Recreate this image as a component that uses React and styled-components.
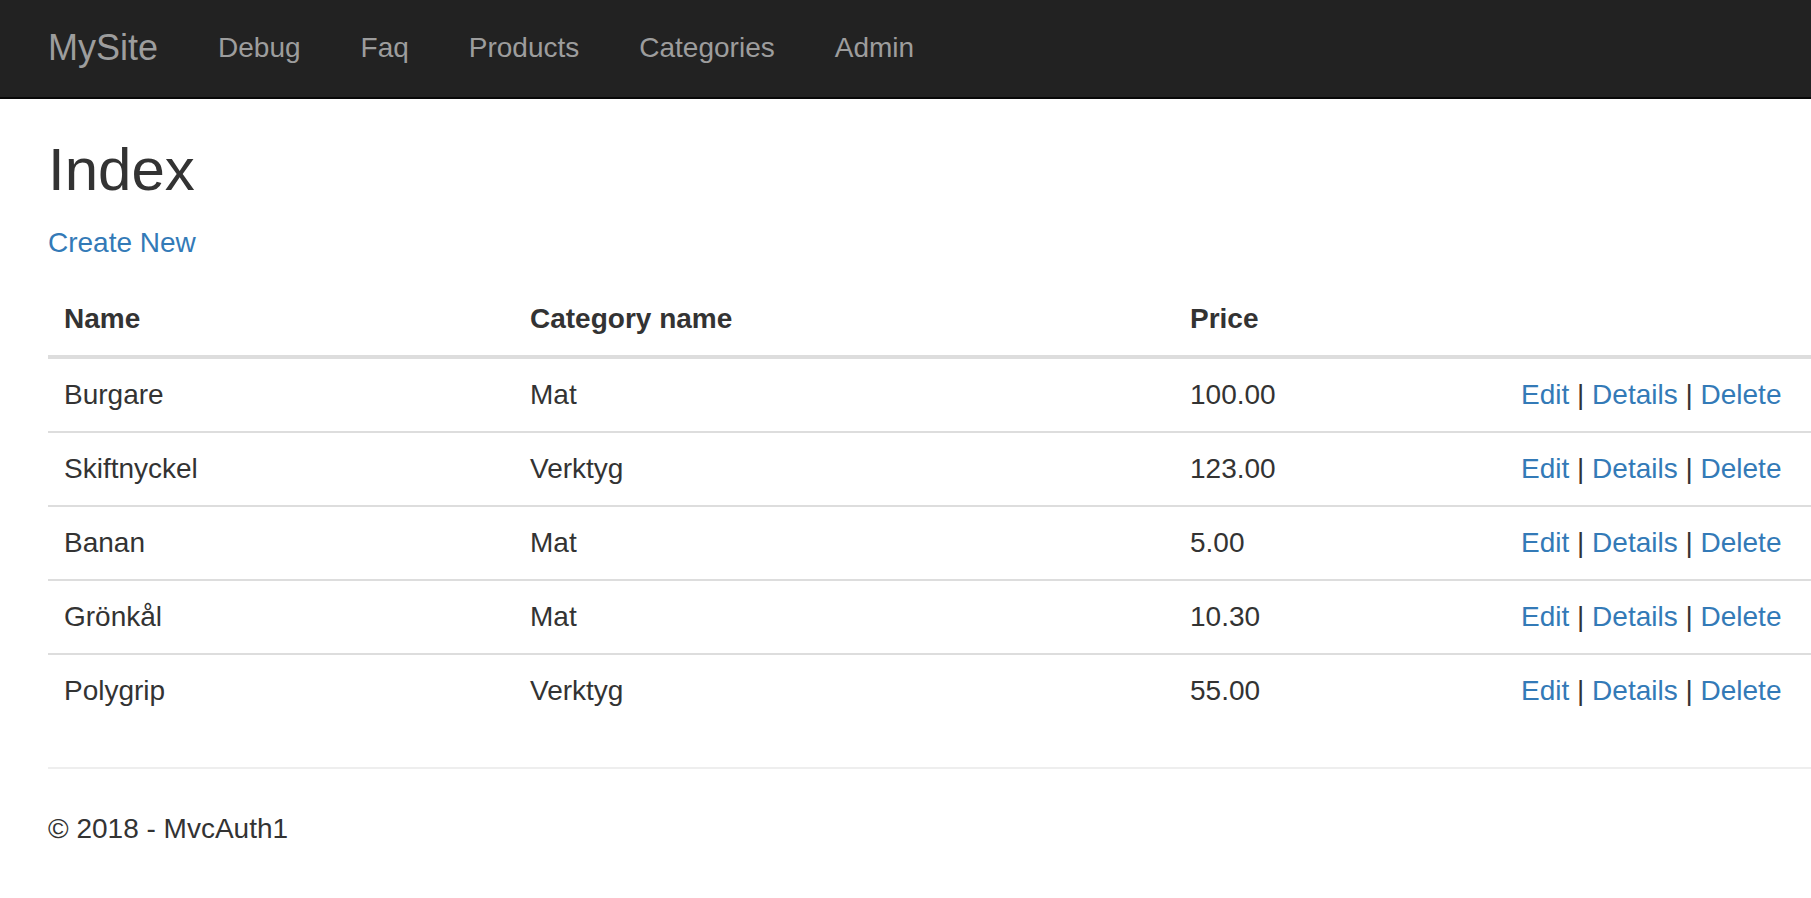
import React from 'react';
import styled, { createGlobalStyle } from 'styled-components';

const GlobalStyle = createGlobalStyle`
  * {
    box-sizing: border-box;
  }

  html,
  body {
    margin: 0;
    padding: 0;
    background: #ffffff;
  }

  body {
    font-family: "Liberation Sans", Arial, Helvetica, sans-serif;
    font-size: 28px;
    line-height: 40px;
    color: #333333;
  }
`;

const Navbar = styled.nav`
  height: 99px;
  background: #222222;
  border-bottom: 2px solid #080808;
  display: flex;
  align-items: center;
  padding: 0 0 2px 48px;
`;

const Brand = styled.a`
  font-size: 36px;
  line-height: 40px;
  color: #9d9d9d;
  text-decoration: none;
  padding-right: 30px;
`;

const NavList = styled.ul`
  display: flex;
  list-style: none;
  margin: 0;
  padding: 0;
`;

const NavLink = styled.a`
  display: block;
  padding: 0 30px;
  font-size: 28px;
  line-height: 40px;
  color: #9d9d9d;
  text-decoration: none;
`;

const BodyContent = styled.main`
  padding-left: 48px;
`;

const Title = styled.h2`
  font-size: 60px;
  line-height: 66px;
  font-weight: 500;
  margin: 38px 0 20px;
`;

const Paragraph = styled.p`
  margin: 0 0 20px;
`;

const Link = styled.a`
  color: #337ab7;
  text-decoration: none;
`;

const Table = styled.table`
  width: 100%;
  table-layout: fixed;
  border-collapse: collapse;
  border-spacing: 0;
  margin-bottom: 40px;
`;

const Th = styled.th`
  width: ${(p) => (p.$width ? `${p.$width}px` : 'auto')};
  text-align: left;
  font-weight: 700;
  padding: 16px;
  line-height: 40px;
  vertical-align: bottom;
  border-bottom: 4px solid #dddddd;
`;

const Td = styled.td`
  padding: 16px;
  line-height: 40px;
  vertical-align: top;
  border-top: 2px solid #dddddd;
  white-space: nowrap;
`;

const Rule = styled.hr`
  margin: 40px 0;
  border: 0;
  border-top: 2px solid #eeeeee;
`;

const Footer = styled.footer`
  p {
    margin: 0 0 20px;
  }
`;

const navItems = ['Debug', 'Faq', 'Products', 'Categories', 'Admin'];

const products = [
  { name: 'Burgare', category: 'Mat', price: '100.00' },
  { name: 'Skiftnyckel', category: 'Verktyg', price: '123.00' },
  { name: 'Banan', category: 'Mat', price: '5.00' },
  { name: 'Grönkål', category: 'Mat', price: '10.30' },
  { name: 'Polygrip', category: 'Verktyg', price: '55.00' },
];

const App = () => {
  return (
    <>
      <GlobalStyle />
      <Navbar>
        <Brand href="#">MySite</Brand>
        <NavList>
          {navItems.map((item) => (
            <li key={item}>
              <NavLink href="#">{item}</NavLink>
            </li>
          ))}
        </NavList>
      </Navbar>

      <BodyContent>
        <Title>Index</Title>
        <Paragraph>
          <Link href="#">Create New</Link>
        </Paragraph>

        <Table>
          <thead>
            <tr>
              <Th $width={466}>Name</Th>
              <Th $width={660}>Category name</Th>
              <Th $width={331}>Price</Th>
              <Th />
            </tr>
          </thead>
          <tbody>
            {products.map((p) => (
              <tr key={p.name}>
                <Td>{p.name}</Td>
                <Td>{p.category}</Td>
                <Td>{p.price}</Td>
                <Td>
                  <Link href="#">Edit</Link> | <Link href="#">Details</Link> |{' '}
                  <Link href="#">Delete</Link>
                </Td>
              </tr>
            ))}
          </tbody>
        </Table>

        <Rule />
        <Footer>
          <p>© 2018 - MvcAuth1</p>
        </Footer>
      </BodyContent>
    </>
  );
};

export default App;
